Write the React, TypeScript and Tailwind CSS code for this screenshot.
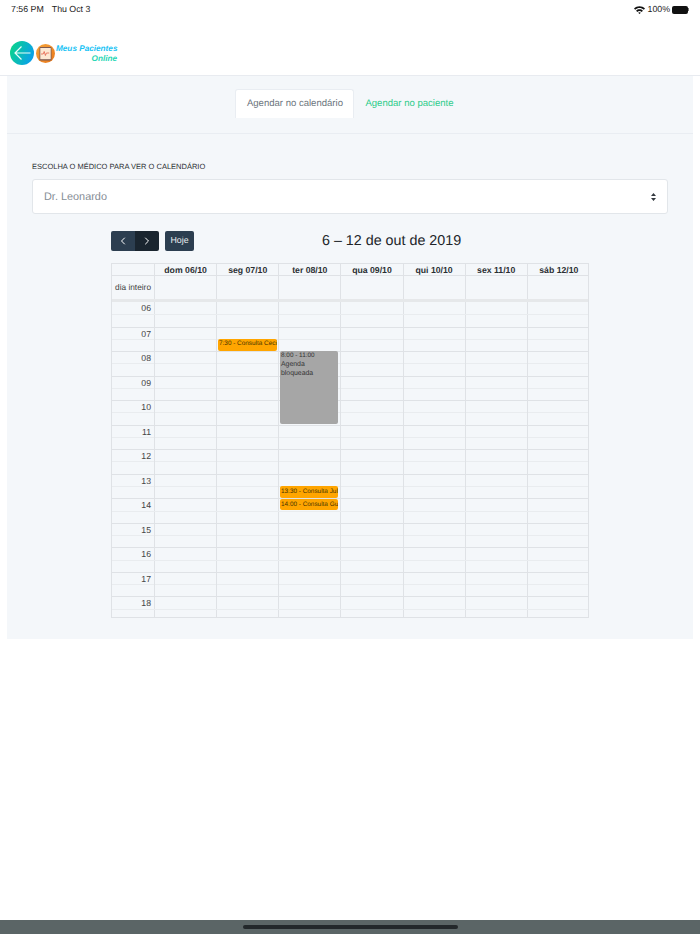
import React from "react";
import { ChevronLeft, ChevronRight } from "lucide-react";

const days = ["dom 06/10", "seg 07/10", "ter 08/10", "qua 09/10", "qui 10/10", "sex 11/10", "sáb 12/10"];
const hours = ["06", "07", "08", "09", "10", "11", "12", "13", "14", "15", "16", "17", "18"];
const cols = "grid grid-cols-[43px_repeat(7,62.14px)]";
const dayIdx = [0, 1, 2, 3, 4, 5, 6];

function Logo() {
  return (
    <svg width="46" height="26" viewBox="0 0 46 26" className="block">
      <defs>
        <linearGradient id="g1" x1="0" y1="0.3" x2="1" y2="0.7">
          <stop offset="0" stopColor="#0bd38c" />
          <stop offset="1" stopColor="#0a9df0" />
        </linearGradient>
        <linearGradient id="g2" x1="0" y1="0" x2="1" y2="1">
          <stop offset="0" stopColor="#f7a53a" />
          <stop offset="1" stopColor="#e8761a" />
        </linearGradient>
      </defs>
      <circle cx="12" cy="13" r="12" fill="url(#g1)" />
      <path d="M20.5 13H5M11.5 6.5L5 13L11.5 19.5" fill="none" stroke="#e9fff8" strokeWidth="1.2" />
      <circle cx="35.5" cy="13.5" r="9.5" fill="url(#g2)" />
      <rect x="29.5" y="7" width="12" height="13.5" rx="1" fill="#7d5a52" />
      <rect x="30.3" y="8" width="10.4" height="11.2" fill="#fde8d2" />
      <path d="M31 14h2.2l1-2.5 1.2 4 1-2.5h2.8" fill="none" stroke="#e2503a" strokeWidth="0.7" />
    </svg>
  );
}

function Wifi() {
  return (
    <svg width="11" height="8" viewBox="0 0 11 8" className="block">
      <path d="M0 2.6C3 -0.6 8 -0.6 11 2.6L9.8 3.8C7.4 1.3 3.6 1.3 1.2 3.8Z" fill="#111" />
      <path d="M2.1 4.7C3.9 2.8 7.1 2.8 8.9 4.7L7.7 5.9C6.5 4.7 4.5 4.7 3.3 5.9Z" fill="#111" />
      <path d="M4.2 6.8C4.9 6.1 6.1 6.1 6.8 6.8L5.5 8Z" fill="#111" />
    </svg>
  );
}

export default function App() {
  return (
    <div className="h-[934px] w-[700px] overflow-hidden bg-white flex flex-col font-['Liberation_Sans',sans-serif] text-[#212529] [text-rendering:geometricPrecision]">
      <div className="h-[17px] pl-[11px] pr-[11px] pt-[2px] flex items-center justify-between text-[8.8px] text-[#222] shrink-0">
        <div className="flex gap-[8px]">
          <span>7:56 PM</span>
          <span>Thu Oct 3</span>
        </div>
        <div className="flex items-center gap-[2px]">
          <Wifi />
          <span className="ml-[1px]">100%</span>
          <div className="flex items-center">
            <div className="w-[16px] h-[8px] rounded-[2px] bg-[#111]" />
            <div className="w-[1px] h-[3px] bg-[#777]" />
          </div>
        </div>
      </div>

      <div className="h-[59px] shrink-0 border-b border-[#e8ebf0] pl-[10px] pt-[23px] flex items-start">
        <Logo />
        <div className="mt-[4px] w-[61px] italic font-bold text-[8.2px] leading-[9.5px] text-right">
          <div className="text-[#19c3f5] whitespace-nowrap">Meus Pacientes</div>
          <div className="text-[#1fd6b4]">Online</div>
        </div>
      </div>

      <div className="mx-[7px] w-[686px] h-[563px] shrink-0 bg-[#f4f7fa]">
        <div className="h-[58px] border-b border-[#e9edf2] flex justify-center items-end">
          <div className="h-[29px] mb-[15px] flex items-stretch text-[9.55px]">
            <div className="w-[119px] pt-[1px] bg-white border border-[#e9edf2] border-b-0 rounded-t-[3px] flex items-center justify-center text-[#6c757d]">
              Agendar no calendário
            </div>
            <div className="pl-[11px] pr-[11px] pt-[1px] flex items-center text-[#2ecc8a]">Agendar no paciente</div>
          </div>
        </div>

        <div className="pl-[25px] pt-[27px]">
          <div className="text-[7.5px] leading-[12px] text-[#2b2f33] whitespace-nowrap">ESCOLHA O MÉDICO PARA VER O CALENDÁRIO</div>
          <div className="mt-[6px] w-[636px] h-[35px] bg-white border border-[#e2e6ea] rounded-[3px] pl-[11px] pr-[11px] pt-[1px] flex items-center justify-between text-[10.9px] text-[#868e96]">
            <span>Dr. Leonardo</span>
            <svg width="5" height="8" viewBox="0 0 5 8" className="block">
              <path d="M2.5 0L5 3H0Z M2.5 8L0 5H5Z" fill="#343a40" />
            </svg>
          </div>
        </div>

        <div className="ml-[104px] mt-[17px] w-[478px]">
          <div className="flex items-center h-[20px]">
            <div className="flex">
              <div className="w-[24px] h-[20px] bg-[#2c3e50] rounded-l-[2px] flex items-center justify-center text-white">
                <ChevronLeft size={12} strokeWidth={2} />
              </div>
              <div className="w-[24px] h-[20px] bg-[#1a252f] rounded-r-[2px] flex items-center justify-center text-white">
                <ChevronRight size={12} strokeWidth={2} />
              </div>
            </div>
            <div className="ml-[6px] w-[29px] h-[20px] bg-[#2c3e50] rounded-[2px] flex items-center justify-center text-[#e8ecef] text-[8.8px]">
              Hoje
            </div>
            <div className="ml-[128px] pt-[1px] text-[14.3px] whitespace-nowrap text-[#212529]">6 – 12 de out de 2019</div>
          </div>

          <div className="relative mt-[12px] w-[478px] border border-[#dfe2e6] text-[8.7px]">
            <div className={`${cols} h-[11px] font-bold text-[#2b2f33]`}>
              <div className="border-r border-[#dfe2e6]" />
              {days.map((d) => (
                <div key={d} className="border-r border-[#dfe2e6] last:border-r-0 flex items-center justify-center">
                  {d}
                </div>
              ))}
            </div>
            <div className={`${cols} h-[24px] border-t border-[#dfe2e6]`}>
              <div className="border-r border-[#dfe2e6] flex items-center justify-end pr-[3px] text-[#444] text-[8.3px]">dia inteiro</div>
              {dayIdx.map((i) => (
                <div key={i} className="border-r border-[#dfe2e6] last:border-r-0" />
              ))}
            </div>
            <div className="h-[3px] bg-[#e6e8ea]" />
            {hours.map((h, n) => (
              <div key={h}>
                <div className={`${cols} h-[12.27px] ${n === 0 ? "" : "border-t border-[#dfe2e6]"}`}>
                  <div className="border-r border-[#dfe2e6] flex items-start justify-end pr-[3px] text-[#444] leading-[12px]">{h}</div>
                  {dayIdx.map((i) => (
                    <div key={i} className="border-r border-[#dfe2e6] last:border-r-0" />
                  ))}
                </div>
                <div className={`${cols} ${n === 12 ? "h-[8.5px]" : "h-[12.27px]"} border-t border-[#e9ecef]`}>
                  <div className="border-r border-[#dfe2e6]" />
                  {dayIdx.map((i) => (
                    <div key={i} className="border-r border-[#dfe2e6] last:border-r-0" />
                  ))}
                </div>
              </div>
            ))}

            <div className="absolute left-[106px] top-[75px] w-[59px] h-[11.5px] bg-[#ffa500] rounded-[2px] px-[1px] text-[6.4px] leading-[10px] text-[#4a3500] overflow-hidden whitespace-nowrap">
              7:30 - Consulta Ceci
            </div>
            <div className="absolute left-[168px] top-[87px] w-[58px] h-[73px] bg-[#a6a6a6] rounded-[2px] px-[1px] text-[#333] overflow-hidden">
              <div className="text-[6.4px] leading-[9px]">8:00 - 11:00</div>
              <div className="text-[6.9px] leading-[9px]">Agenda bloqueada</div>
            </div>
            <div className="absolute left-[168px] top-[222px] w-[58px] h-[11.5px] bg-[#ffa500] rounded-[2px] px-[1px] text-[6.4px] leading-[11px] text-[#4a3500] overflow-hidden whitespace-nowrap">
              13:30 - Consulta Juli
            </div>
            <div className="absolute left-[168px] top-[234.5px] w-[58px] h-[11.5px] bg-[#ffa500] rounded-[2px] px-[1px] text-[6.4px] leading-[11px] text-[#4a3500] overflow-hidden whitespace-nowrap">
              14:00 - Consulta Gui
            </div>
          </div>
        </div>
      </div>

      <div className="flex-1" />
      <div className="h-[14px] shrink-0 bg-[#5b6566] flex items-center justify-center">
        <div className="w-[215px] h-[4px] rounded-full bg-[#23282b]" />
      </div>
    </div>
  );
}
